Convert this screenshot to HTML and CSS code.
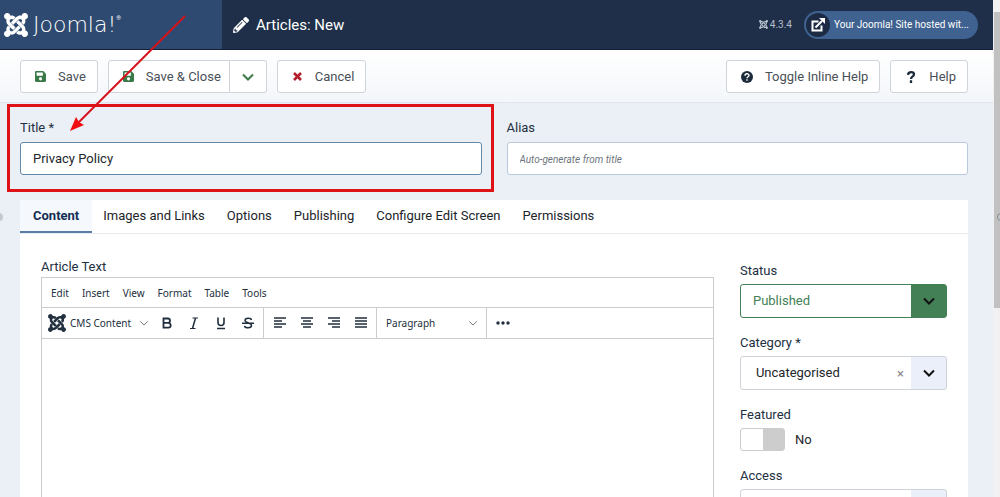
FILE: index.html
```html
<!DOCTYPE html>
<html lang="en">
<head>
<meta charset="utf-8">
<title>Articles: New</title>
<link rel="stylesheet" href="styles.css">
</head>
<body>
<svg class="defs" aria-hidden="true">
  <symbol id="joomla" viewBox="0 32 448 448"><path d="M.6 92.1C.6 58.8 27.4 32 60.4 32c30 0 54.5 21.9 59.2 50.2 32.6-7.6 67.1.6 96.5 30l-44.3 44.3c-20.5-20.5-42.6-16.3-55.4-3.5-14.3 14.3-14.3 37.9 0 52.2l99.5 99.5-44 44.3c-87.7-87.2-49.7-49.7-99.8-99.7-26.8-26.5-35-64.8-24.8-98.9C20.4 144.6.6 120.7.6 92.1zm129.5 116.4l44.3 44.3c10-10 89.7-89.7 99.7-99.8 14.3-14.3 37.6-14.3 51.9 0 12.8 12.8 17 35-3.5 55.4l44 44.3c31.2-31.2 38.5-67.6 28.9-101.2 29.2-4.1 51.9-29.2 51.9-59.5 0-33.2-26.8-60.1-59.8-60.1-30.3 0-55.4 22.5-59.5 51.6-33.8-9.9-71.7-1.5-98.3 25.1-18.3 19.1-71.1 71.5-99.6 99.9zm266.3 152.2c8.2-32.7-.9-68.5-26.3-93.9-11.8-12.2 5 4.7-99.5-99.7l-44.3 44.3 99.7 99.7c14.3 14.3 14.3 37.6 0 51.9-12.8 12.8-35 17-55.4-3.5l-44 44.3c27.6 30.2 68 38.8 102.7 28 5.5 27.4 29.7 48.1 58.9 48.1 33 0 59.8-26.8 59.8-60.1 0-30.2-22.5-55-51.6-59.1zm-84.3-53.1l-44-44.3c-87 86.4-50.4 50.4-99.7 99.8-14.3 14.3-37.6 14.3-51.9 0-13.1-13.4-16.9-35.3 3.2-55.4l-44-44.3c-30.2 30.2-38 65.2-29.5 98.3-26.7 6-46.2 29.9-46.2 58.2C0 453.2 26.8 480 59.8 480c28.6 0 52.5-19.8 58.6-46.7 32.7 8.2 68.5-.6 94.2-26 32.1-32 12.2-12.4 99.5-99.7z"/></symbol>
  <symbol id="save" viewBox="0 32 448 448"><path d="M433.941 129.941l-83.882-83.882A48 48 0 0 0 316.118 32H48C21.49 32 0 53.49 0 80v352c0 26.51 21.49 48 48 48h352c26.51 0 48-21.49 48-48V163.882a48 48 0 0 0-14.059-33.941zM224 416c-35.346 0-64-28.654-64-64 0-35.346 28.654-64 64-64s64 28.654 64 64c0 35.346-28.654 64-64 64zm96-304.52V212c0 6.627-5.373 12-12 12H76c-6.627 0-12-5.373-12-12V108c0-6.627 5.373-12 12-12h228.52c3.183 0 6.235 1.264 8.485 3.515l3.48 3.48A11.996 11.996 0 0 1 320 111.48z"/></symbol>
  <symbol id="pencil" viewBox="0 0 512 512"><path d="M497.9 142.1l-46.1 46.1c-4.7 4.7-12.3 4.7-17 0l-111-111c-4.7-4.7-4.7-12.3 0-17l46.1-46.1c18.7-18.7 49.1-18.7 67.9 0l60.1 60.1c18.8 18.7 18.8 49.1 0 67.9zM284.2 99.8L21.6 362.4.4 483.9c-2.9 16.4 11.4 30.6 27.8 27.8l121.5-21.3 262.6-262.6c4.7-4.7 4.7-12.3 0-17l-111-111c-4.8-4.7-12.4-4.7-17.1 0zM124.1 339.9c-5.5-5.5-5.5-14.3 0-19.8l154-154c5.5-5.5 14.3-5.5 19.8 0s5.5 14.3 0 19.8l-154 154c-5.5 5.5-14.3 5.5-19.8 0zM88 424h48v36.3l-64.5 11.3-31.1-31.1L51.7 376H88v48z"/></symbol>
  <symbol id="chevron" viewBox="0 0 12 12"><path d="M1 3.500l5 5 5-5" fill="none" stroke="currentColor" stroke-width="2"/></symbol>
  <symbol id="chevron-thin" viewBox="0 0 12 12"><path d="M1.500 4l4.500 4.500L10.500 4" fill="none" stroke="currentColor" stroke-width="1.200"/></symbol>
</svg>

<div class="app">
  <header class="header">
    <a class="brand" href="#">
      <svg class="brand-mark"><use href="#joomla"/></svg>
      <span class="brand-name">Joomla!</span><span class="brand-reg">®</span>
    </a>
    <div class="page-title">
      <svg class="icon-16"><use href="#pencil"/></svg>
      <h1>Articles: New</h1>
    </div>
    <div class="version"><svg class="icon-9"><use href="#joomla"/></svg>4.3.4</div>
    <a class="site-link" href="#">
      <span class="site-icon"><svg class="icon-14" viewBox="0 0 14 14"><path d="M7.500 3.500H1.500v9h9V7.500M4.500 9.500L11 3" fill="none" stroke="currentColor" stroke-width="2"/><path d="M8 0h6v6z"/></svg></span>
      Your Joomla! Site hosted wit...
    </a>
  </header>

  <div class="toolbar">
    <button class="btn"><svg class="icon-11 green"><use href="#save"/></svg>Save</button>
    <div class="btn-group">
      <button class="btn"><svg class="icon-11 green"><use href="#save"/></svg>Save &amp; Close</button>
      <button class="btn btn-drop" aria-label="More save options"><svg class="icon-12 green"><use href="#chevron"/></svg></button>
    </div>
    <button class="btn"><svg class="icon-11 red" viewBox="0 0 11 11"><path d="M2 2l7 7M9 2l-7 7" stroke="currentColor" stroke-width="2.600"/></svg>Cancel</button>
    <button class="btn push"><svg class="icon-12 dark" viewBox="0 0 12 12"><circle cx="6" cy="6" r="6"/><path d="M4 4.800C4 2.200 8 2.200 8 4.500 8 5.800 6 5.700 6 7.200M6 8.200v1.500" fill="none" stroke="#fff" stroke-width="1.400"/></svg>Toggle Inline Help</button>
    <button class="btn"><svg class="icon-12 dark" viewBox="0 0 12 12"><path d="M3 3.800C3.400.2 9 .5 9 3.500 9 5.500 6 5.300 6 8M6 9.300V12" fill="none" stroke="currentColor" stroke-width="2.300"/></svg>Help</button>
  </div>

  <main class="content">
    <div class="title-row">
      <div class="field title-field">
        <label for="title">Title *</label>
        <input id="title" class="focused" type="text" value="Privacy Policy">
        <span class="highlight"></span>
      </div>
      <div class="field">
        <label for="alias">Alias</label>
        <input id="alias" type="text" placeholder="Auto-generate from title">
      </div>
    </div>

    <section class="card">
      <nav class="tabs">
        <button class="tab active">Content</button>
        <button class="tab">Images and Links</button>
        <button class="tab">Options</button>
        <button class="tab">Publishing</button>
        <button class="tab">Configure Edit Screen</button>
        <button class="tab">Permissions</button>
      </nav>
      <div class="panel">
        <div class="main-col">
          <label for="article">Article Text</label>
          <div class="editor">
            <div class="menubar">
              <button>Edit</button><button>Insert</button><button>View</button><button>Format</button><button>Table</button><button>Tools</button>
            </div>
            <div class="tools">
              <div class="tool-group first">
                <button class="cms"><svg class="icon-18"><use href="#joomla"/></svg>CMS Content<svg class="icon-10 grey"><use href="#chevron-thin"/></svg></button>
                <button class="tool" aria-label="Bold"><svg class="icon-14" viewBox="0 0 14 14"><path d="M3.500 2.500h4.300a2.200 2.200 0 0 1 0 4.400H3.500zM3.500 6.900h4.800a2.400 2.400 0 0 1 0 4.800H3.500z" fill="none" stroke="currentColor" stroke-width="1.800"/></svg></button>
                <button class="tool" aria-label="Italic"><svg class="icon-14" viewBox="0 0 14 14"><path d="M5.500 2H11M3 12.500h5.500" stroke="currentColor"/><path d="M8.500 2L5.500 12.500" stroke="currentColor" stroke-width="1.500"/></svg></button>
                <button class="tool" aria-label="Underline"><svg class="icon-14" viewBox="0 0 14 14"><path d="M4 1.500v5a3 3 0 0 0 6 0v-5M3 12.500h8" fill="none" stroke="currentColor" stroke-width="1.600"/></svg></button>
                <button class="tool" aria-label="Strikethrough"><svg class="icon-14" viewBox="0 0 14 14"><path d="M10.500 4C10 1.500 4 1.500 4 4.500 4 7 10.500 6.500 10.500 9.500c0 3-6.500 3-7 .3M1 7.200h12" fill="none" stroke="currentColor" stroke-width="1.500"/></svg></button>
              </div>
              <div class="tool-group">
                <button class="tool" aria-label="Align left"><svg class="icon-14" viewBox="0 0 14 14"><path d="M1 2h12M1 5h8M1 8h12M1 11h8" stroke="currentColor" stroke-width="1.500"/></svg></button>
                <button class="tool" aria-label="Align centre"><svg class="icon-14" viewBox="0 0 14 14"><path d="M1 2h12M3 5h8M1 8h12M3 11h8" stroke="currentColor" stroke-width="1.500"/></svg></button>
                <button class="tool" aria-label="Align right"><svg class="icon-14" viewBox="0 0 14 14"><path d="M1 2h12M5 5h8M1 8h12M5 11h8" stroke="currentColor" stroke-width="1.500"/></svg></button>
                <button class="tool" aria-label="Justify"><svg class="icon-14" viewBox="0 0 14 14"><path d="M1 2h12M1 5h12M1 8h12M1 11h12" stroke="currentColor" stroke-width="1.500"/></svg></button>
              </div>
              <div class="tool-group">
                <button class="format">Paragraph<svg class="icon-10 grey"><use href="#chevron-thin"/></svg></button>
              </div>
              <div class="tool-group">
                <button class="tool" aria-label="More"><svg class="icon-14" viewBox="0 0 14 14"><circle cx="2" cy="7" r="1.700"/><circle cx="7" cy="7" r="1.700"/><circle cx="12" cy="7" r="1.700"/></svg></button>
              </div>
            </div>
            <textarea id="article"></textarea>
          </div>
        </div>

        <aside class="side-col">
          <div class="field">
            <label for="status">Status</label>
            <div class="select published">
              <select id="status"><option>Published</option></select>
              <svg class="select-arrow"><use href="#chevron"/></svg>
            </div>
          </div>
          <div class="field">
            <label for="category">Category *</label>
            <div class="select clearable">
              <select id="category"><option>Uncategorised</option></select>
              <button class="clear" aria-label="Clear category">×</button>
              <svg class="select-arrow"><use href="#chevron"/></svg>
            </div>
          </div>
          <div class="field">
            <label for="featured">Featured</label>
            <div class="switch-row"><input id="featured" class="switch" type="checkbox"><span>No</span></div>
          </div>
          <div class="field">
            <label for="access">Access</label>
            <div class="select">
              <select id="access"><option></option></select>
              <svg class="select-arrow"><use href="#chevron"/></svg>
            </div>
          </div>
        </aside>
      </div>
    </section>
  </main>
  <span class="handle handle-left"></span>
</div>
<div class="scrollbar"><span class="thumb"></span></div>
<span class="handle handle-right"></span>
<svg class="arrow" viewBox="0 0 120 120" aria-hidden="true"><path d="M115 2L8 109" stroke="#d7111b" stroke-width="2"/><path d="M0 117l6-14 3 5 5 3z" fill="#f20d12"/></svg>
</body>
</html>
```
FILE: styles.css
```css
* { box-sizing: border-box; }

body {
  margin: 0;
  display: flex;
  height: 100vh;
  overflow: hidden;
  background: #ebeff6;
  color: #22262a;
  font: 13px/20px Roboto, sans-serif;
  position: relative;
}

button, input, select, textarea { font: inherit; color: inherit; margin: 0; }
button { border: 0; padding: 0; background: none; white-space: nowrap; }
a { color: inherit; text-decoration: none; }
svg { fill: currentColor; flex: none; }
label { display: block; color: #22303f; }

.defs { position: absolute; width: 0; height: 0; }
.icon-9 { width: 9px; height: 9px; }
.icon-10 { width: 10px; height: 10px; }
.icon-11 { width: 11px; height: 11px; }
.icon-12 { width: 12px; height: 12px; }
.icon-14 { width: 14px; height: 14px; }
.icon-16 { width: 16px; height: 16px; }
.icon-18 { width: 18px; height: 18px; }
.green { color: #397a48; }
.red { color: #b3202b; }
.grey { color: #777; }
.dark { color: #1c2b3c; }

.app { flex: 1; min-width: 0; position: relative; overflow: hidden; }

/* Header */
.header {
  display: flex;
  align-items: center;
  height: 50px;
  padding-right: 15px;
  background: #1f2f49;
  border-bottom: 1px solid #142136;
  color: #fff;
}
.brand {
  display: flex;
  align-items: center;
  align-self: stretch;
  width: 222px;
  padding-left: 4px;
  background: #2f4a70;
}
.brand-mark { width: 24px; height: 24px; margin-right: 5px; }
.brand-name { font: 200 22px/28px "DejaVu Sans", sans-serif; }
.brand-reg { font-size: 6px; line-height: 20px; align-self: flex-start; padding-top: 8px; }
.page-title { display: flex; align-items: center; gap: 7px; padding-left: 11px; flex: 1; }
.page-title h1 { margin: 0; font-size: 15px; font-weight: 400; }
.version { display: flex; align-items: center; gap: 2px; color: #b4bdca; font-size: 10px; margin-right: 12px; }
.site-link {
  display: flex;
  align-items: center;
  gap: 4px;
  height: 28px;
  padding: 0 9px 0 2px;
  border-radius: 14px;
  background: #406290;
  font-size: 10px;
}
.site-icon { display: grid; place-items: center; width: 24px; height: 24px; border-radius: 50%; background: #1c2b43; }

/* Toolbar */
.toolbar {
  display: flex;
  gap: 10px;
  padding: 10px 25px 9px 20px;
  background: linear-gradient(#fff, #f3f6fa);
  border-bottom: 1px solid #e0e4eb;
}
.btn {
  display: flex;
  align-items: center;
  gap: 12px;
  height: 33px;
  padding: 0 11px 0 14px;
  border: 1px solid #ced4da;
  border-radius: 3px;
  background: #fff;
  color: #495057;
}
.btn-group { display: flex; }
.btn-group .btn:first-child { border-radius: 3px 0 0 3px; padding-right: 8px; }
.btn-group .btn-drop { border-radius: 0 3px 3px 0; border-left: 0; padding: 0 12px; }
.push { margin-left: auto; }

/* Title and alias */
.content { padding: 15px 25px 0 20px; }
.title-row { display: grid; grid-template-columns: 1fr 1fr; gap: 25px; margin-bottom: 25px; }
.title-field { position: relative; }
.title-row label { margin-bottom: 4px; }
.title-row input {
  display: block;
  width: 100%;
  height: 33px;
  padding: 0 12px;
  border: 1px solid #b9c8da;
  border-radius: 3px;
  background: #fff;
  color: #22262a;
}
.title-row .focused { border-color: #6488a8; }
.title-row input::placeholder { color: #6c757d; font-size: 10px; font-style: italic; }
.highlight {
  position: absolute;
  inset: -14px -12px -17px -13px;
  border: 3px solid #df1217;
  pointer-events: none;
}

/* Card */
.card { background: #fff; }
.tabs { display: flex; border-bottom: 1px solid #e9ebee; }
.tab { height: 33px; padding: 0 11px; border-bottom: 2px solid transparent; color: #212529; }
.tab.active { padding: 0 13px; background: #f5f8fc; border-color: #5b7ea6; color: #132f53; font-weight: 700; }
.panel { display: grid; grid-template-columns: 13fr 4fr; gap: 26px; padding: 23px 21px; }

/* Editor */
.editor { border: 1px solid #ccc; font: 10px/16px "Noto Sans", sans-serif; color: #222f3e; }
.menubar { display: flex; gap: 13px; height: 30px; padding: 0 9px; border-bottom: 1px solid #ccc; }
.tools { display: flex; height: 31px; border-bottom: 1px solid #ccc; }
.tool-group { display: flex; align-items: center; padding: 0 2px; border-right: 1px solid #ccc; }
.tool-group.first { padding-left: 6px; }
.tool-group:last-child { border-right: 0; }
.tool { display: grid; place-items: center; width: 27px; height: 24px; }
.cms, .format { display: flex; align-items: center; gap: 4px; }
.cms { width: 101px; margin-right: 4px; }
.cms svg:last-child, .format svg { margin-left: auto; }
.format { width: 105px; padding: 0 6px 0 7px; }
.editor textarea { display: block; width: 100%; min-height: 300px; border: 0; outline: 0; resize: none; }

/* Options column */
.side-col { padding-top: 4px; }
.side-col .field { margin-bottom: 15px; }
.side-col label { margin-bottom: 3px; }
.select { position: relative; }
.select select {
  appearance: none;
  display: block;
  width: 100%;
  height: 34px;
  padding: 0 48px 0 12px;
  border: 1px solid #ced4da;
  border-radius: 3px;
  background: linear-gradient(to left, #ebeff9 35px, #fff 35px);
}
.select.published select { color: #448055; border-color: #448055; background: linear-gradient(to left, #448055 35px, #fff 35px); }
.select.clearable select { padding-left: 15px; }
.select-arrow { position: absolute; right: 12px; top: 11px; width: 12px; height: 12px; color: #111; pointer-events: none; }
.clear { position: absolute; right: 43px; top: 8px; color: #888; }
.switch-row { display: flex; align-items: center; gap: 10px; height: 23px; }
.switch {
  appearance: none;
  width: 45px;
  height: 23px;
  border: 1px solid #ccc;
  border-radius: 3px;
  background: linear-gradient(to right, #fff 50%, #cdcdcd 50%);
}

/* Window edges */
.scrollbar { width: 7px; padding: 12px 0 0 1px; background: #f1f1f1; }
.thumb { display: block; height: 61%; background: #c1c1c1; }
.handle { position: absolute; top: 213px; width: 8px; height: 8px; border-radius: 50%; background: #c5c8ce; }
.handle-left { left: -5px; }
.handle-right { right: -5px; border: 1px solid #888; }
.arrow { position: absolute; left: 70px; top: 14px; width: 120px; height: 120px; pointer-events: none; }
```
